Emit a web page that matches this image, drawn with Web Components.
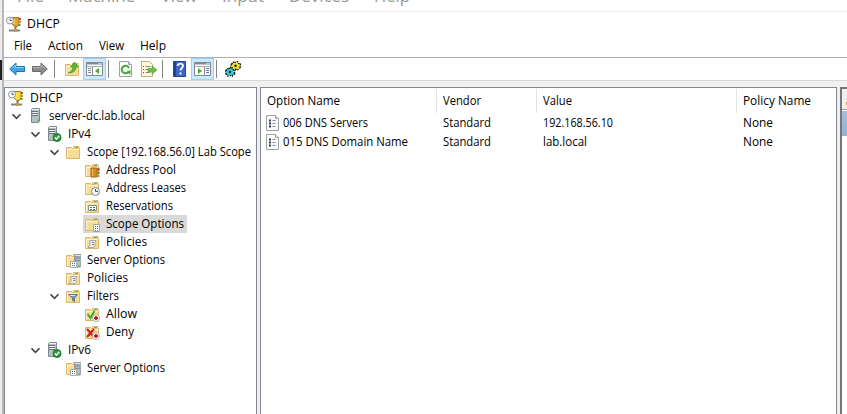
<!DOCTYPE html>
<html lang="en"><head><meta charset="utf-8"><title>DHCP</title>
<style>
html,body{margin:0;width:847px;height:414px;overflow:hidden;background:#fff;color:#000;font:12px "Open Sans","Noto Sans",sans-serif}
</style></head><body><dhcp-console></dhcp-console>
<script>
const folder='<path d="M1.5 3.500h5l1 1h7v10h-13z" fill="#f6dc98" stroke="#dcb866"/><path d="M8.500 4v-1.500h5.500v2" fill="#fff0c0" stroke="#dcb866"/><path d="M10 3.500h3" stroke="#58a6c5"/><path d="M2.500 6v7.500" stroke="#fff3cf"/><path d="M2 5.500h12" stroke="#fff3cf"/>';
const tower='<path d="M4.500 1.500l1-1h7v13l-1 1h-7z" fill="#b6bfc5" stroke="#7e888f"/><path d="M5 1.500h7M5.500 4.500h5M5.500 6.500h5" stroke="#edf2f4"/><path d="M5 3.500h6M5 5.500h6M5 7.500h6" stroke="#66737b"/>';
const dhcp=c=>`<path d="M5.500 1.500h7.500v6l-1.500 3h-3l-3-3z" fill="${c}" stroke="#a87a1c"/><path d="M8 3v5" stroke="#fff0a0"/><path d="M14 2v2" stroke="#c5443b" stroke-width="2"/><path d="M14 5v2" stroke="#d98a2b" stroke-width="2"/><path d="M13.500 8v2" stroke="#57933f" stroke-width="2"/><path d="M9.500 11v3" stroke="#777" stroke-width="2"/><path d="M3 14.500h11" stroke="#7c8589" stroke-width="2"/><path d="M8 13h3v3H8z" fill="#bd9d55"/><circle cx="4" cy="4.500" r="3.500" fill="#f5f8fa" stroke="#8b949b"/><path d="M4 2.500v2h2" fill="none" stroke="#626a70"/>`;
const sheet='<path d="M1.500.5h9l3 3v12h-12z" fill="#fafafa" stroke="#a2a2a2"/><path d="M10.500.5v3h3" fill="#ddd" stroke="#a2a2a2"/>';
const plus='<circle cx="12" cy="12" r="3.500" fill="#fff" stroke="#a9a9a9"/><path d="M12 10v4M10 12h4" stroke="#c71821" stroke-width="1.800"/>';
const grid='<path d="M9.500 8.500h6v7h-6z" fill="#fff" stroke="#a5a5a5"/><path d="M11 10.500h1m1 0h1m-3 2h1m1 0h1m-3 2h1m1 0h1" stroke="#646a78"/>';
const paneIcon=(a)=>`<path d="M.5 1.500h16v13H.5z" fill="#fff" stroke="#848a91"/><path d="M1 2.500h15" stroke="#848a91" stroke-width="2"/><path d="M1 5.500h15" stroke="#a5abb0"/><path d="M12.500 2.500h1m1 0h1" stroke="#fff"/>`+(a==='l'?'<path d="M6.500 6v8" stroke="#848a91"/><path d="M2 7.500h3M2 9.500h3M2 11.500h3" stroke="#7b8793"/><path d="M13 7v6l-4-3z" fill="#43a928"/>':'<path d="M10.500 6v8" stroke="#848a91"/><path d="M12 7.500h3M12 9.500h3M12 11.500h3" stroke="#5c78ab"/><path d="M4 7v6l4-3z" fill="#43a928"/>');
const gear=(x,y,c)=>`<g transform="translate(${x} ${y}) scale(1.080)"><path d="M-4-2l2 0 0-2 2 1 2-1 1 2 2 0-1 2 1 2-2 0-1 2-2-1-2 1-1-2-2 0 1-2z" fill="${c}" stroke="#000" stroke-dasharray="1.500 1"/><path d="M-1-1h2v2h-2z" fill="#111"/></g>`;
const icons={
dhcp:dhcp('#e7a338'),dhcpy:dhcp('#f2e02c'),tower:tower+'<path d="M10 12.500h2" stroke="#37df32" stroke-width="2"/>',
ok:'<g transform="translate(-2 0)">'+tower+'</g><circle cx="11" cy="11.500" r="4" fill="#269b36" stroke="#187629"/><path d="M8.800 11.500l1.700 1.700 2.800-3.400" fill="none" stroke="#fff" stroke-width="1.500"/>',
folder,
pool:folder+'<path d="M7 6h6v9H7z" fill="#d98b23" stroke="#9d6418"/><path d="M8.500 7v7" stroke="#f4c15c"/><path d="M14.500 6v3" stroke="#b84932" stroke-width="2"/><path d="M14.500 10v2" stroke="#3b8240" stroke-width="2"/><path d="M14.500 13v2" stroke="#c98733" stroke-width="2"/>',
leases:folder+'<circle cx="11.500" cy="11.500" r="4" fill="#edf5fa" stroke="#7d8b95"/><path d="M11.500 9v2.500h2.500" fill="none" stroke="#44525c"/>',
reserve:folder+'<path d="M4.500 7.500h8v5h-8z" fill="#fff" stroke="#888f90"/><path d="M6 9.500h2m1 0h2m-5 2h2m1 0h2" stroke="#329253"/><path d="M9 9.500h2" stroke="#466ba0"/>',
options:folder+grid,
policy:folder+'<path d="M6 6.500h6l-1 2v4l-1 1H4l1-2h1z" fill="#eee" stroke="#aaa"/><path d="M8 8.500h2m-2 2h2" stroke="#888"/>',
server:folder+'<g transform="translate(6 2) scale(.8 .9)">'+tower+'</g><path d="M5.500 9.500h6v6h-6z" fill="#fff" stroke="#aaa"/><path d="M7 11.500h1m1 0h1m-3 2h1m1 0h1" stroke="#596579"/><path d="M13 14h2" stroke="#39cd31"/>',
filter:folder+'<path d="M3.500 6.500h9L9.500 10v3.500l-2-1V10z" fill="#6f96bd" stroke="#5f7890"/><path d="M5 7.500h5" stroke="#d4e8f6"/>',
allow:folder+'<path d="M3.500 8l3 4 4-7" fill="none" stroke="#38ac22" stroke-width="2"/>'+plus,
deny:folder+'<path d="M3 5l7 8M10 5l-7 8" stroke="#d71e19" stroke-width="2.200"/>'+plus,
item:sheet+'<path d="M4 5.500h2m-2 3h2m-2 3h2" stroke="#34394a" stroke-width="2"/><path d="M7.500 5.500h3m-3 3h3m-3 3h3" stroke="#8d8da0"/>',
back:'<path d="M.7 8L7 2v3.500h8.500v5H7V14z" fill="#38a7e8" stroke="#2473b0"/><path d="M3 7.500L6.500 4v2.500h8" fill="none" stroke="#86d3f8"/>',
forward:'<path d="M15.300 8L9 2v3.500H.5v5H9V14z" fill="#8b8b8b" stroke="#686868"/><path d="M1 6.500h8.500V4l3.500 3.500" fill="none" stroke="#b8b8b8"/>',
up:folder+'<path d="M4 12c3-1 5-3 5-6H6.500l4-5 4 5H12c0 4-3 6-8 6z" fill="#55bd2b" stroke="#388b20" stroke-width=".6"/>',
refresh:sheet+'<path d="M10.800 10.500A3.800 3.800 0 1 1 11 7" fill="none" stroke="#3eaa38" stroke-width="2"/><path d="M12.500 9v4.500L8.500 11z" fill="#3eaa38"/>',
export:'<path d="M.5.500h8l3 3v12H.5z" fill="#fff8dc" stroke="#b9ac83"/><path d="M2 5.500h1m-1 3h1m-1 3h1" stroke="#555"/><path d="M4.500 5.500h5m-5 3h3m-3 3h5" stroke="#8c8378"/><path d="M7 7.500h4V5l5 4-5 4v-2.500H7z" fill="#68c343" stroke="#48992c" stroke-width=".6"/>',
help:'<path d="M1.500.5h12v15h-12z" fill="#3d66c6" stroke="#21439d"/><path d="M3 1v14" stroke="#234398" stroke-width="2"/><path d="M5.700 5c0-3.500 5.500-3 5.300 0 0 2-2.500 2-2.500 4.500" fill="none" stroke="#fff" stroke-width="1.800"/><path d="M7.500 11.500h2v2h-2z" fill="#fff"/>',
left:paneIcon('l'),right:paneIcon('r'),gears:gear(10.5,4.8,'#f4e62a')+gear(5,11,'#32cfd5')};
const define=(n,c)=>customElements.define(n,c);
define('ui-icon',class extends HTMLElement{connectedCallback(){const w=this.getAttribute('w')||16;this.attachShadow({mode:'open'}).innerHTML=`<style>:host{display:block;flex:none;width:${w}px;height:16px}svg{display:block}</style><svg width="${w}" height="16" viewBox="0 0 ${w} 16">${icons[this.getAttribute('name')]}</svg>`}});
/* A one-line label condensed to the advance width given in "w". */
define('fit-label',class extends HTMLElement{connectedCallback(){const w=+this.getAttribute('w');const r=this.attachShadow({mode:'open'});r.innerHTML=`<style>:host{display:block;flex:none;width:${w}px;white-space:pre}span{display:inline-block;transform-origin:0 50%}</style><span><slot></slot></span>`;const s=r.querySelector('span');s.style.transform=`scaleX(${w/s.getBoundingClientRect().width})`}});
define('tool-button',class extends HTMLElement{connectedCallback(){this.attachShadow({mode:'open'}).innerHTML=`<style>:host{display:flex;flex:none;box-sizing:border-box;width:23px;height:22px;align-items:center;justify-content:center}:host([on]){background:#cce8ff;border:1px solid #99d1ff}</style><slot></slot>`}});
define('tool-sep',class extends HTMLElement{connectedCallback(){this.attachShadow({mode:'open'}).innerHTML='<style>:host{display:block;flex:none;width:1px;height:18px;background:#858585}</style>'}});
define('tree-row',class extends HTMLElement{connectedCallback(){const l=+this.getAttribute('level');const o=this.hasAttribute('open');this.attachShadow({mode:'open'}).innerHTML=`<style>:host{display:flex;height:18px;align-items:center;padding-left:${l?19*l-12:3}px;line-height:18px}i{display:flex;width:${l?15:0}px;flex:none}b{font-weight:400;padding:0 3px;margin-left:3px;height:18px}:host([selected]) b{background:#d9d9d9}:host([selected]) ui-icon{background:#d9d9d9;box-shadow:3px 1px #d9d9d9,3px -1px #d9d9d9,-1px 1px #d9d9d9,-1px -1px #d9d9d9}</style><i>${o?'<svg width="10" height="7" viewBox="0 0 10 7"><path d="M.5 1.300l4 4 4-4" fill="none" stroke="#454545" stroke-width="1.600"/></svg>':''}</i><ui-icon name="${this.getAttribute('icon')}"></ui-icon><b><fit-label w="${this.getAttribute('w')}">${this.textContent}</fit-label></b>`}});
define('list-row',class extends HTMLElement{connectedCallback(){const h=this.hasAttribute('head');const cells=JSON.parse(this.getAttribute('cells'));this.attachShadow({mode:'open'}).innerHTML=`<style>:host{display:grid;grid-template-columns:176px 100px 200px 1fr;height:${h?24:19}px;line-height:${h?24:19}px}div{display:flex;align-items:center;box-sizing:border-box;padding-left:6px;${h?'border-right:1px solid #e3e3e3;':''}}div:first-child{padding-left:${h?7:5}px}div:last-child{border:0}ui-icon{margin:0 2px 0 0}</style>`+cells.map((c,i)=>`<div>${!h&&!i?'<ui-icon name="item"></ui-icon>':''}<fit-label w="${c[1]}">${c[0]}</fit-label></div>`).join('')}});
define('vm-menu',class extends HTMLElement{connectedCallback(){this.attachShadow({mode:'open'}).innerHTML=`<style>:host{display:flex;height:11px;overflow:hidden;box-sizing:border-box;color:#999;font-size:17px;line-height:22px;padding-left:13px}fit-label{margin-top:-15px}</style>`+[['File',27,24],['Machine',67,26],['View',36,25],['Input',42,25],['Devices',60,25],['Help',36,0]].map(x=>`<fit-label w="${x[1]}" style="margin-right:${x[2]}px">${x[0]}</fit-label>`).join('')}});
define('dhcp-console',class extends HTMLElement{connectedCallback(){this.attachShadow({mode:'open'}).innerHTML=`<style>
:host{display:flex;width:847px;height:414px;overflow:hidden}
.edge{width:4px;flex:none;box-sizing:border-box;display:flex;flex-direction:column;background:linear-gradient(90deg,#ededed 0 2px,#b7b7b7 2px 4px)}
.edge i{height:1px;margin-top:25px;background:#c9c9c9}.edge b{width:2px;height:20px;margin-top:34px;background:#202020}
.app{flex:1;min-width:0;display:flex;flex-direction:column}
.title{height:23px;border-top:1px solid #eee;display:flex;align-items:center;padding-left:2px;gap:5px}
.menu{height:21px;padding-bottom:1px;display:flex;align-items:center;padding-left:10px}.menu fit-label{margin-top:-1px}
.bar{height:22px;border-top:1px solid #afafaf;border-bottom:1px solid #d9d9d9;display:flex;align-items:center}
.work{flex:1;background:#f0f0f0;padding-top:6px;display:flex;min-height:0}
.tree{box-sizing:border-box;width:253px;border:1px solid #828790;border-bottom:0;background:#fff;padding-top:1px}
.list{box-sizing:border-box;width:577px;margin-left:3px;border:1px solid #828790;border-bottom:0;background:#fff;padding-top:1px}
.list list-row:not([head]){margin-left:-2px;padding-left:0}
.actions{box-sizing:border-box;width:7px;margin-left:3px;border:2px solid #777;border-right:0;border-bottom:0;background:#fff;overflow:hidden}
.actions i{display:flex;height:20px;background:#f0f0f0;border-bottom:1px solid #999;align-items:center;justify-content:flex-end}.actions i::after{content:"";width:1px;height:3px;background:#d49a20;margin-top:8px}.actions b{display:block;height:25px;margin-top:1px;background:linear-gradient(#a4bfdc,#94b0d2)}
.list list-row:not([head]){grid-template-columns:178px 100px 200px 1fr}
</style><div class="edge"><i></i><b></b></div><div class="app"><vm-menu></vm-menu>
<div class="title"><ui-icon name="dhcp"></ui-icon><fit-label w="33">DHCP</fit-label></div>
<div class="menu"><fit-label w="18">File</fit-label><fit-label w="35" style="margin-left:16px">Action</fit-label><fit-label w="25" style="margin-left:16px">View</fit-label><fit-label w="26" style="margin-left:16px">Help</fit-label></div>
<div class="bar"><tool-button style="margin-left:1.500px"><ui-icon name="back"></ui-icon></tool-button><tool-button><ui-icon name="forward"></ui-icon></tool-button><tool-sep style="margin-left:2.500px"></tool-sep><tool-button style="margin-left:5px"><ui-icon name="up"></ui-icon></tool-button><tool-button on><ui-icon name="left" w="17"></ui-icon></tool-button><tool-sep style="margin-left:2px"></tool-sep><tool-button style="margin-left:5px"><ui-icon name="refresh"></ui-icon></tool-button><tool-button><ui-icon name="export"></ui-icon></tool-button><tool-sep style="margin-left:2px"></tool-sep><tool-button style="margin-left:5px"><ui-icon name="help"></ui-icon></tool-button><tool-button on><ui-icon name="right" w="17"></ui-icon></tool-button><tool-sep style="margin-left:2px"></tool-sep><tool-button style="margin-left:4px"><ui-icon name="gears"></ui-icon></tool-button></div>
<div class="work"><div class="tree">${[
['DHCP',0,'dhcpy',33],['server-dc.lab.local',1,'tower',96,1],['IPv4',2,'ok',23,1],['Scope [192.168.56.0] Lab Scope',3,'folder',164,1],['Address Pool',4,'pool',70],['Address Leases',4,'leases',80],['Reservations',4,'reserve',67],['Scope Options',4,'options',78,0,1],['Policies',4,'policy',41],['Server Options',3,'server',78],['Policies',3,'policy',41],['Filters',3,'filter',32,1],['Allow',4,'allow',31],['Deny',4,'deny',28],['IPv6',2,'ok',23,1],['Server Options',3,'server',78]].map(r=>`<tree-row level="${r[1]}" icon="${r[2]}" w="${r[3]}"${r[4]?' open':''}${r[5]?' selected':''}>${r[0]}</tree-row>`).join('')}</div>
<div class="list"><list-row head cells='[["Option Name",73],["Vendor",38],["Value",29],["Policy Name",68]]'></list-row><list-row cells='[["006 DNS Servers",85],["Standard",48],["192.168.56.10",70],["None",30]]'></list-row><list-row cells='[["015 DNS Domain Name",125],["Standard",48],["lab.local",44],["None",30]]'></list-row></div><div class="actions"><i></i><b></b></div></div></div>`}});
</script></body></html>
